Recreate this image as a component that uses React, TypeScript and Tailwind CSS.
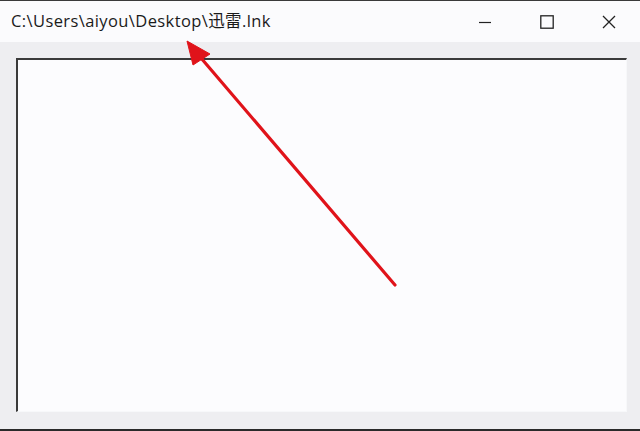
import React from "react";

const TitleBar = ({ title }: { title: string }) => {
  return (
    <div className="flex items-center h-[41px] bg-[#fbfbfd] pl-[11px]">
      <span className="flex-1 text-[16.5px] leading-none tracking-[0.4px] text-[#1a1a1a] font-['Open_Sans','Noto_Sans_CJK_SC',sans-serif]">
        {title}
      </span>
      <div className="flex items-center h-full">
        {/* 最小化 */}
        <button className="flex items-center justify-center w-[62px] h-full">
          <svg width="14" height="14" viewBox="0 0 14 14">
            <line x1="1" y1="7.5" x2="13" y2="7.5" stroke="#222" strokeWidth="1.2" />
          </svg>
        </button>
        {/* 最大化 */}
        <button className="flex items-center justify-center w-[62px] h-full">
          <svg width="14" height="14" viewBox="0 0 14 14">
            <rect x="0.8" y="0.8" width="12.4" height="12.4" fill="none" stroke="#222" strokeWidth="1.3" />
          </svg>
        </button>
        {/* 关闭 */}
        <button className="flex items-center justify-center w-[62px] h-full">
          <svg width="14" height="14" viewBox="0 0 14 14">
            <path d="M1 1 L13 13 M13 1 L1 13" stroke="#222" strokeWidth="1.3" />
          </svg>
        </button>
      </div>
    </div>
  );
};

const App = () => {
  return (
    <div className="relative w-[640px] h-[431px] flex flex-col overflow-hidden border-t border-t-[#3a3a3a] border-b-2 border-b-[#2a2a2a] bg-[#eeeef1]">
      <TitleBar title="C:\Users\aiyou\Desktop\迅雷.lnk" />

      <div className="flex-1 flex pl-4 pt-4 pr-[13px] pb-[17px] bg-[#eeeef1]">
        <div className="flex-1 border-t-2 border-l-2 border-t-[#3a3a3a] border-l-[#3a3a3a] border-r border-b border-r-[#f7f8fa] border-b-[#f7f8fa] bg-[#fcfcfe]" />
      </div>

      {/* 箭头标注 */}
      <svg className="absolute left-0 top-0 pointer-events-none" width="640" height="431" viewBox="0 0 640 431">
        <line x1="395" y1="284" x2="201" y2="57" stroke="#e0131a" strokeWidth="3.2" strokeLinecap="round" />
        <polygon points="187,40 210,53 193,64" fill="#e0131a" stroke="#e0131a" strokeWidth="1" strokeLinejoin="round" />
      </svg>
    </div>
  );
};

export default App;
